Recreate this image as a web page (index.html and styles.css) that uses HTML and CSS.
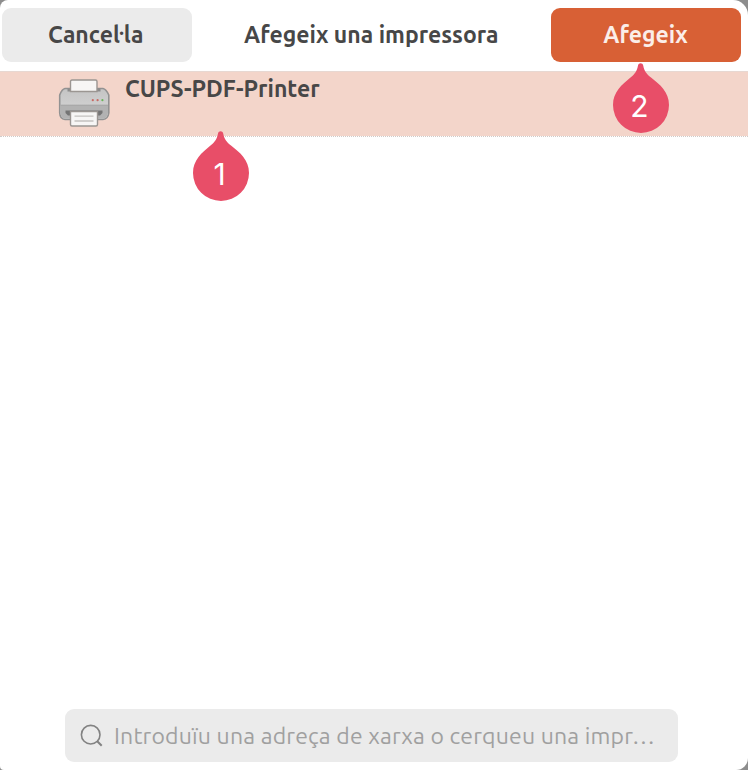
FILE: index.html
```html
<!DOCTYPE html>
<html lang="ca">
<head>
<meta charset="utf-8">
<title>Afegeix una impressora</title>
<link rel="stylesheet" href="styles.css">
</head>
<body>
<div class="dialog">
  <header class="header">
    <button class="btn cancel">Cancel·la</button>
    <h1 class="title">Afegeix una impressora</h1>
    <button class="btn add">Afegeix</button>
  </header>
  <main class="list">
    <div class="row">
      <svg class="printer" width="52" height="50" viewBox="0 0 52 50">
        <defs>
          <linearGradient id="body" x1="0" y1="0" x2="0" y2="1"><stop offset="0" stop-color="#c4c4c4"/><stop offset="1" stop-color="#d8d8d8"/></linearGradient>
        </defs>
        <path d="M7 9.5H45Q48 10 50.8 16V34Q50 40 45 40.5H7Q2 40 1.7 34V16Q4 10 7 9.5Z" fill="url(#body)" stroke="#929292" stroke-width="1.6"/>
        <path d="M2.5 26.2H50V34Q49 39.5 45 39.7H7Q3 39.5 2.5 34Z" fill="#b2b2b2"/>
        <path d="M2.5 26.2H50" stroke="#a2a2a2" stroke-width="1"/>
        <path d="M9.5 9.5V12.5H42.5V9.5Z" fill="#8c8c8c"/>
        <path d="M12.5 12.5V2.5Q12.5 1 14 1H37.5Q39 1 39 2.5V12.5Z" fill="#f7f6f5" stroke="#9b9692" stroke-width="1.4"/>
        <path d="M7.5 31.5H44.5V34L42 36.5H10L7.5 34Z" fill="#747474"/>
        <path d="M12.5 32.5H39.5V45.5Q39.5 47 38 47H14Q12.5 47 12.5 45.5Z" fill="#f7f6f5" stroke="#9b9692" stroke-width="1.4"/>
        <path d="M16.5 37.2H35.5M16.5 42H35.5" stroke="#c3c1bf" stroke-width="1.3"/>
        <circle cx="34.8" cy="21.2" r="1.1" fill="#c86a64"/><circle cx="39.6" cy="21.2" r="1.1" fill="#c86a64"/><circle cx="44.4" cy="21.2" r="1.1" fill="#69b558"/>
      </svg>
      <span class="name">CUPS-PDF-Printer</span>
    </div>
  </main>
  <footer class="footer">
    <div class="search">
      <svg class="glass" width="24" height="24" viewBox="0 0 24 24" fill="none" stroke="#828282"><circle cx="10.7" cy="10.7" r="9.3" stroke-width="1.6"/><path d="M17 17L21.7 21.7" stroke-width="2"/></svg>
      <span class="placeholder">Introduïu una adreça de xarxa o cerqueu una impr…</span>
    </div>
  </footer>
</div>
<div class="pin pin-one">
  <svg width="56" height="70" viewBox="0 0 56 70"><path d="M25 2.5C25.6-.4 29.6-.4 30.2 2.5C31.2 8 33.5 11 38 14.5C47 21.5 56 29 56 42A28 28 0 0 1 0 42C0 29 9 21.5 17.5 14.5C22 11 24 8 25 2.5Z" fill="#e84e68"/></svg>
  <span>1</span>
</div>
<div class="pin pin-two">
  <svg width="56" height="70" viewBox="0 0 56 70"><path d="M25 2.5C25.6-.4 29.6-.4 30.2 2.5C31.2 8 33.5 11 38 14.5C47 21.5 56 29 56 42A28 28 0 0 1 0 42C0 29 9 21.5 17.5 14.5C22 11 24 8 25 2.5Z" fill="#e84e68"/></svg>
  <span>2</span>
</div>
</body>
</html>
```
FILE: styles.css
```css
* { box-sizing: border-box; }
html { background: #8d8d8d; }
body {
  margin: 0;
  height: 770px;
  position: relative;
  overflow: hidden;
  font-family: Ubuntu, "Noto Sans", sans-serif;
  color: #474747;
}
.dialog {
  height: 770px;
  display: flex;
  flex-direction: column;
  background: #fff;
  border-radius: 8px 15px 12px 4px;
  overflow: hidden;
}
.header {
  height: 71px;
  padding: 8px 7px 9px 2px;
  display: grid;
  grid-template-columns: 189.5px 1fr 190px;
}
.btn {
  border: 0;
  border-radius: 9px;
  padding: 0 1px 1px 0;
  font: inherit;
  font-weight: 600;
  font-size: 23px;
  line-height: 53px;
  white-space: nowrap;
}
.cancel { background: #ebebeb; color: #474747; padding-right: 2px; }
.add { background: #d86035; color: #fbeee9; }
.title {
  margin: 0;
  text-align: center;
  font-size: 23px;
  font-weight: 600;
  line-height: 53px;
  white-space: nowrap;
}
.list { flex: 1; }
.row {
  height: 66px;
  display: flex;
  align-items: flex-start;
  padding: 7px 0 0 58px;
  background: #f3d5ca;
  background-clip: padding-box;
  border-top: 1px solid #e7d8d2;
  border-bottom: 1px dotted #d0cbc9;
}
.printer { flex: none; }
.name {
  margin: -4px 0 0 15px;
  font-size: 23px;
  font-weight: 600;
  line-height: 28px;
  white-space: nowrap;
}
.footer { padding: 0 70px 8px 65px; }
.search {
  height: 53px;
  display: flex;
  align-items: center;
  padding-left: 15px;
  border-radius: 9px;
  background: #ebebeb;
}
.glass { flex: none; }
.placeholder {
  margin: 1px 0 0 10px;
  font-size: 23px;
  font-weight: 400;
  letter-spacing: 0.18px;
  color: #a0a0a0;
  line-height: 30px;
  white-space: nowrap;
}
.pin { position: absolute; width: 56px; height: 70px; }
.pin svg { display: block; }
.pin span {
  position: absolute;
  inset: 27px 2px auto 0;
  text-align: center;
  font: 400 30px/32px Inter, sans-serif;
  color: #fff;
}
.pin-one { left: 192.5px; top: 131px; }
.pin-two { left: 612.5px; top: 63px; }
```
